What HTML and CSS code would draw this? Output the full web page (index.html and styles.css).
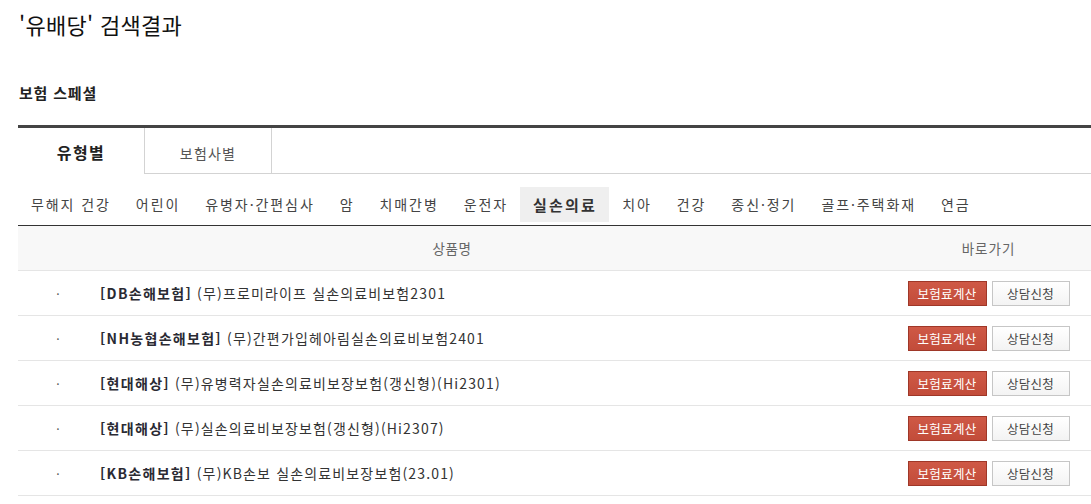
FILE: index.html
```html
<!DOCTYPE html>
<html lang="ko">
<head>
<meta charset="utf-8">
<title>'유배당' 검색결과</title>
<link rel="stylesheet" href="styles.css">
</head>
<body>
<div class="wrap">
  <h1 class="title">'유배당' 검색결과</h1>
  <h2 class="section">보험 스페셜</h2>
  <div class="tabs">
    <div class="tab active">유형별</div>
    <div class="tab">보험사별</div>
    <div class="tab-fill"></div>
  </div>
  <ul class="cats">
    <li>무해지 건강</li>
    <li>어린이</li>
    <li>유병자·간편심사</li>
    <li>암</li>
    <li>치매간병</li>
    <li>운전자</li>
    <li class="on">실손의료</li>
    <li>치아</li>
    <li>건강</li>
    <li>종신·정기</li>
    <li>골프·주택화재</li>
    <li>연금</li>
  </ul>
  <div class="table">
    <div class="thead">
      <div class="c-name">상품명</div>
      <div class="c-act">바로가기</div>
    </div>
    <div class="row">
      <div class="c-name"><span class="dot">·</span><span class="prod"><b>[DB손해보험]</b> (무)프로미라이프 실손의료비보험2301</span></div>
      <div class="c-act"><a class="btn red">보험료계산</a><a class="btn white">상담신청</a></div>
    </div>
    <div class="row">
      <div class="c-name"><span class="dot">·</span><span class="prod"><b>[NH농협손해보험]</b> (무)간편가입헤아림실손의료비보험2401</span></div>
      <div class="c-act"><a class="btn red">보험료계산</a><a class="btn white">상담신청</a></div>
    </div>
    <div class="row">
      <div class="c-name"><span class="dot">·</span><span class="prod"><b>[현대해상]</b> (무)유병력자실손의료비보장보험(갱신형)(Hi2301)</span></div>
      <div class="c-act"><a class="btn red">보험료계산</a><a class="btn white">상담신청</a></div>
    </div>
    <div class="row">
      <div class="c-name"><span class="dot">·</span><span class="prod"><b>[현대해상]</b> (무)실손의료비보장보험(갱신형)(Hi2307)</span></div>
      <div class="c-act"><a class="btn red">보험료계산</a><a class="btn white">상담신청</a></div>
    </div>
    <div class="row">
      <div class="c-name"><span class="dot">·</span><span class="prod"><b>[KB손해보험]</b> (무)KB손보 실손의료비보장보험(23.01)</span></div>
      <div class="c-act"><a class="btn red">보험료계산</a><a class="btn white">상담신청</a></div>
    </div>
  </div>
</div>
</body>
</html>
```

FILE: styles.css
```css
* { box-sizing: border-box; }
html, body { margin: 0; padding: 0; background: #fff; }
body {
  font-family: "Noto Sans CJK KR", "Noto Sans", "Liberation Sans", sans-serif;
  color: #333;
}
.wrap { padding: 9px 0 0 18px; }
.title {
  margin: 0;
  font-size: 22px;
  line-height: 30px;
  font-weight: normal;
  letter-spacing: 0.3px;
  color: #111;
  padding-left: 1px;
}
.section {
  margin: 44px 0 0;
  font-size: 15px;
  line-height: 20px;
  font-weight: bold;
  letter-spacing: 0.8px;
  color: #222;
  padding-left: 1px;
}
.tabs {
  margin-top: 22px;
  border-top: 3px solid #444;
  display: flex;
  height: 49px;
}
.tab {
  width: 128px;
  display: flex;
  align-items: center;
  justify-content: center;
  font-size: 14px;
  letter-spacing: 1.2px;
  color: #555;
  border-left: 1px solid #d3d3d3;
  border-right: 1px solid #d3d3d3;
  border-bottom: 1px solid #d3d3d3;
  padding-top: 5px;
}
.tab.active {
  width: 126px;
  border: none;
  font-size: 16px;
  font-weight: bold;
  letter-spacing: 1.5px;
  color: #222;
  padding-top: 2px;
}
.tab-fill { flex: 1; border-bottom: 1px solid #d3d3d3; }
.cats {
  list-style: none;
  margin: 0;
  padding: 13px 0 3px;
  display: flex;
  border-bottom: 1px solid #333;
}
.cats li {
  height: 35px;
  line-height: 35px;
  padding: 0 12px 0 13px;
  font-size: 14px;
  letter-spacing: 1.92px;
  color: #444;
  white-space: nowrap;
}
.cats li.on {
  background: #efefef;
  font-weight: bold;
  font-size: 15px;
  letter-spacing: 2.2px;
  padding: 0 12px 0 13px;
  color: #333;
}
.table { display: flex; flex-direction: column; }
.thead, .row {
  display: flex;
  height: 45px;
  border-bottom: 1px solid #e5e5e5;
  align-items: center;
}
.thead {
  background: #f8f8f8;
  font-size: 13.5px;
  color: #666;
}
.thead .c-name { text-align: center; letter-spacing: 0.5px; }
.thead .c-act { justify-content: center; letter-spacing: 1px; }
.c-name { width: 868px; display: flex; align-items: center; }
.thead .c-name { display: block; }
.c-act {
  flex: 1;
  display: flex;
  justify-content: center;
  gap: 5px;
}
.dot {
  width: 80px;
  text-align: center;
  font-size: 12px;
  color: #555;
}
.prod {
  padding-left: 2px;
  font-size: 14px;
  letter-spacing: 1.15px;
  color: #333;
  white-space: nowrap;
}
.prod b { color: #2a2a33; letter-spacing: 1.3px; }
.btn {
  display: flex;
  align-items: center;
  justify-content: center;
  height: 25px;
  font-size: 12.5px;
  letter-spacing: 0.3px;
  white-space: nowrap;
}
.btn.red {
  width: 79px;
  background: linear-gradient(#cf5946, #c24c3a);
  border: 1px solid #9f3728;
  color: #fff;
}
.btn.white {
  width: 78px;
  background: linear-gradient(#fff, #f3f3f3);
  border: 1px solid #c6c6c6;
  color: #444;
}
```
